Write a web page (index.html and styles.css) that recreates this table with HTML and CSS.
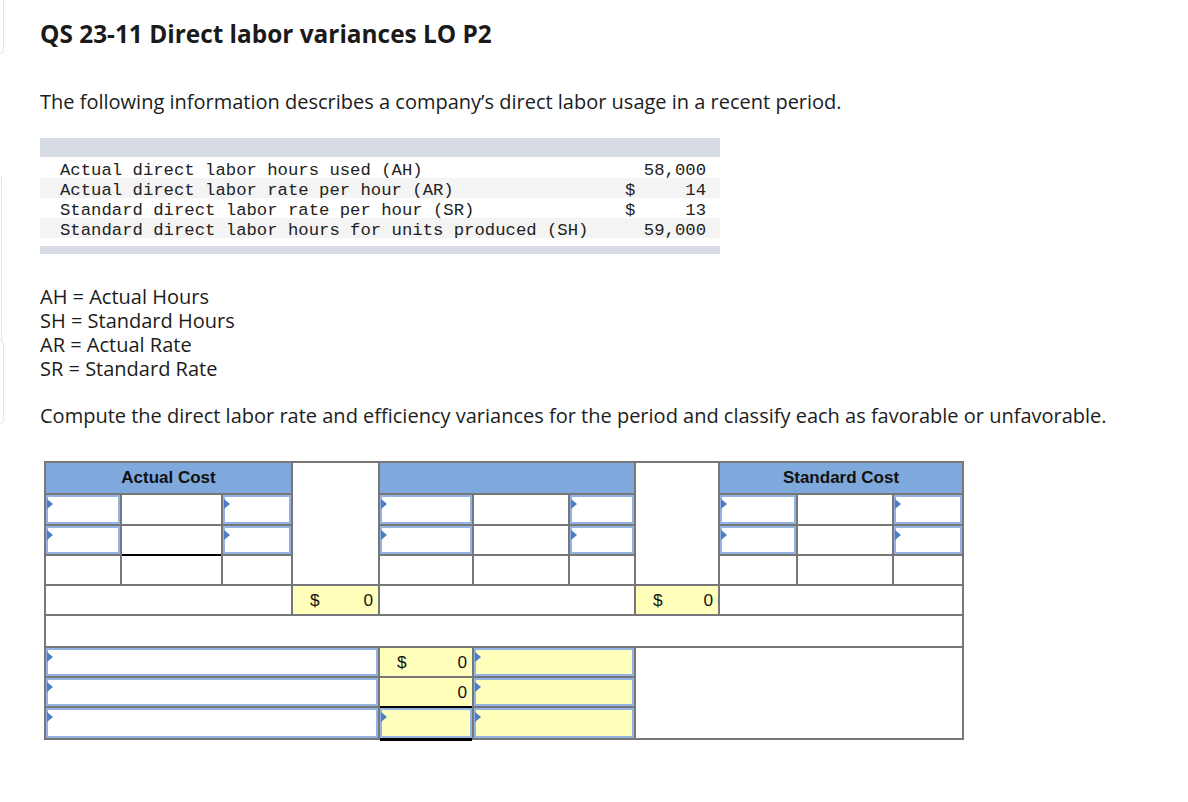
FILE: index.html
```html
<!DOCTYPE html>
<html>
<head>
<meta charset="utf-8">
<link rel="stylesheet" href="styles.css">
</head>
<body>
<div class="edge edge-a"></div>
<div class="edge edge-b"></div>
<div class="edge edge-c"></div>
<main class="page">
  <h1 class="title">QS 23-11 Direct labor variances LO P2</h1>
  <p class="intro">The following information describes a company’s direct labor usage in a recent period.</p>

  <div class="data">
    <div class="data-bar"></div>
    <div class="data-row">
      <span class="data-label">Actual direct labor hours used (AH)</span>
      <span class="data-val"><span></span><span>58,000</span></span>
    </div>
    <div class="data-row alt">
      <span class="data-label">Actual direct labor rate per hour (AR)</span>
      <span class="data-val"><span>$</span><span>14</span></span>
    </div>
    <div class="data-row">
      <span class="data-label">Standard direct labor rate per hour (SR)</span>
      <span class="data-val"><span>$</span><span>13</span></span>
    </div>
    <div class="data-row alt">
      <span class="data-label">Standard direct labor hours for units produced (SH)</span>
      <span class="data-val"><span></span><span>59,000</span></span>
    </div>
    <div class="data-bar bottom"></div>
  </div>

  <div class="legend">
    <div>AH = Actual Hours</div>
    <div>SH = Standard Hours</div>
    <div>AR = Actual Rate</div>
    <div>SR = Standard Rate</div>
  </div>

  <p class="task">Compute the direct labor rate and efficiency variances for the period and classify each as favorable or unfavorable.</p>

  <div class="sheet">
    <!-- row 1 -->
    <div class="hd c1-3">Actual Cost</div>
    <div class="blank c4 r1-4"></div>
    <div class="hd c5-7"></div>
    <div class="blank c8 r1-4"></div>
    <div class="hd c9-11">Standard Cost</div>
    <!-- row 2 -->
    <div class="cell"><div class="inp"></div></div>
    <div class="blank"></div>
    <div class="cell"><div class="inp"></div></div>
    <div class="cell"><div class="inp"></div></div>
    <div class="blank"></div>
    <div class="cell"><div class="inp"></div></div>
    <div class="cell"><div class="inp"></div></div>
    <div class="blank"></div>
    <div class="cell"><div class="inp"></div></div>
    <!-- row 3 -->
    <div class="cell"><div class="inp"></div></div>
    <div class="blank under-black"></div>
    <div class="cell"><div class="inp"></div></div>
    <div class="cell"><div class="inp"></div></div>
    <div class="blank"></div>
    <div class="cell"><div class="inp"></div></div>
    <div class="cell"><div class="inp"></div></div>
    <div class="blank"></div>
    <div class="cell"><div class="inp"></div></div>
    <!-- row 4 -->
    <div class="blank"></div>
    <div class="blank"></div>
    <div class="blank"></div>
    <div class="blank"></div>
    <div class="blank"></div>
    <div class="blank"></div>
    <div class="blank"></div>
    <div class="blank"></div>
    <div class="blank"></div>
    <!-- row 5 -->
    <div class="blank c1-3"></div>
    <div class="yel money"><span>$</span><span>0</span></div>
    <div class="blank c5-7"></div>
    <div class="yel money"><span>$</span><span>0</span></div>
    <div class="blank c9-11"></div>
    <!-- row 6 -->
    <div class="blank call"></div>
    <!-- row 7 -->
    <div class="cell c1-4"><div class="inp"></div></div>
    <div class="yel money"><span>$</span><span>0</span></div>
    <div class="cell c6-7"><div class="inp yel-inp"></div></div>
    <div class="blank c8-11 r7-9"></div>
    <!-- row 8 -->
    <div class="cell c1-4"><div class="inp"></div></div>
    <div class="yel money"><span></span><span>0</span></div>
    <div class="cell c6-7"><div class="inp yel-inp"></div></div>
    <!-- row 9 -->
    <div class="cell c1-4"><div class="inp"></div></div>
    <div class="cell black-frame"><div class="inp yel-inp"></div></div>
    <div class="cell c6-7"><div class="inp yel-inp"></div></div>
  </div>
</main>
</body>
</html>
```
FILE: styles.css
```css
html, body {
  margin: 0;
  padding: 0;
  background: #ffffff;
}
body {
  font-family: "Open Sans", "Liberation Sans", sans-serif;
  color: #1c1c1c;
  position: relative;
  min-height: 802px;
}
.edge {
  position: absolute;
  left: -4px;
  width: 6px;
  border: 1px solid #e6e6e6;
  border-radius: 0 4px 4px 0;
}
.edge-a { top: -4px; height: 56px; }
.edge-b { top: 177px; height: 162px; border-radius: 0; width: 4px; }
.edge-c { top: 340px; height: 82px; }

.page {
  padding: 19px 0 0 40px;
}
.title {
  margin: 0;
  font-size: 24.4px;
  line-height: 30px;
  font-weight: 700;
  color: #1a1a1a;
}
.intro {
  margin: 41px 0 0;
  font-size: 20px;
  line-height: 24px;
}
.data {
  width: 680px;
  margin-top: 24px;
  font-family: "Liberation Mono", "DejaVu Sans Mono", monospace;
  font-size: 17.28px;
  color: #222;
}
.data-bar {
  height: 19px;
  background: #d8dce5;
  margin-bottom: 1px;
}
.data-bar.bottom {
  height: 8px;
  margin: 8px 0 0;
}
.data-row {
  display: flex;
  height: 20px;
  line-height: 20px;
  padding-top: 3px;
  box-sizing: border-box;
  padding-left: 20px;
}
.data-row.alt {
  background: #f4f4f4;
}
.data-label {
  flex: 1;
  white-space: pre;
}
.data-val {
  width: 81px;
  margin-right: 14px;
  display: flex;
  justify-content: space-between;
}
.legend {
  margin-top: 31px;
  font-size: 20px;
  line-height: 24px;
}
.task {
  margin: 23px 0 0;
  font-size: 20px;
  line-height: 24px;
}

/* worksheet */
.sheet {
  margin: 33px 0 0 4px;
  width: 920px;
  display: grid;
  grid-template-columns: 74px 99px 68px 85px 92px 94px 64px 82px 76px 94px 68px;
  grid-template-rows: 30px 29px 28px 28px 28px 30px 28px 28px 30px;
  gap: 2px;
  padding: 2px;
  box-sizing: border-box;
  background: #777777;
  font-family: "Liberation Sans", Arial, sans-serif;
  font-size: 17.28px;
  color: #111;
}
.sheet > div {
  background: #ffffff;
  position: relative;
}
.hd {
  background: #7fa9dc !important;
  font-weight: 700;
  display: flex;
  align-items: center;
  justify-content: center;
  font-size: 17px;
}
.c1-3 { grid-column: 1 / 4; }
.c5-7 { grid-column: 5 / 8; }
.c9-11 { grid-column: 9 / 12; }
.c1-4 { grid-column: 1 / 5; }
.c6-7 { grid-column: 6 / 8; }
.c8-11 { grid-column: 8 / 12; }
.call { grid-column: 1 / 12; }
.c4 { grid-column: 4; }
.c8 { grid-column: 8; }
.r1-4 { grid-row: 1 / 5; }
.r7-9 { grid-row: 7 / 10; }

.yel {
  background: #ffffbb !important;
}
.money {
  display: flex;
  align-items: center;
  justify-content: space-between;
  padding: 0 5px 0 17px;
}
.inp {
  position: absolute;
  inset: 0;
  border: 2px solid #93b3e3;
  box-shadow: inset 0 0 0 1px #ffffff;
  background: #ffffff;
}
.inp::before {
  content: "";
  position: absolute;
  left: -1px;
  top: 2px;
  border-top: 5px solid transparent;
  border-bottom: 5px solid transparent;
  border-left: 6px solid #4d7dc2;
}
.inp.yel-inp {
  background: #ffffbb;
  box-shadow: inset 0 0 0 1px #ffffbb;
}
.under-black {
  box-shadow: 0 2px 0 #000000;
}
.black-frame {
  box-shadow: 0 -2px 0 #000000, 0 3px 0 #000000;
  z-index: 1;
}
```
